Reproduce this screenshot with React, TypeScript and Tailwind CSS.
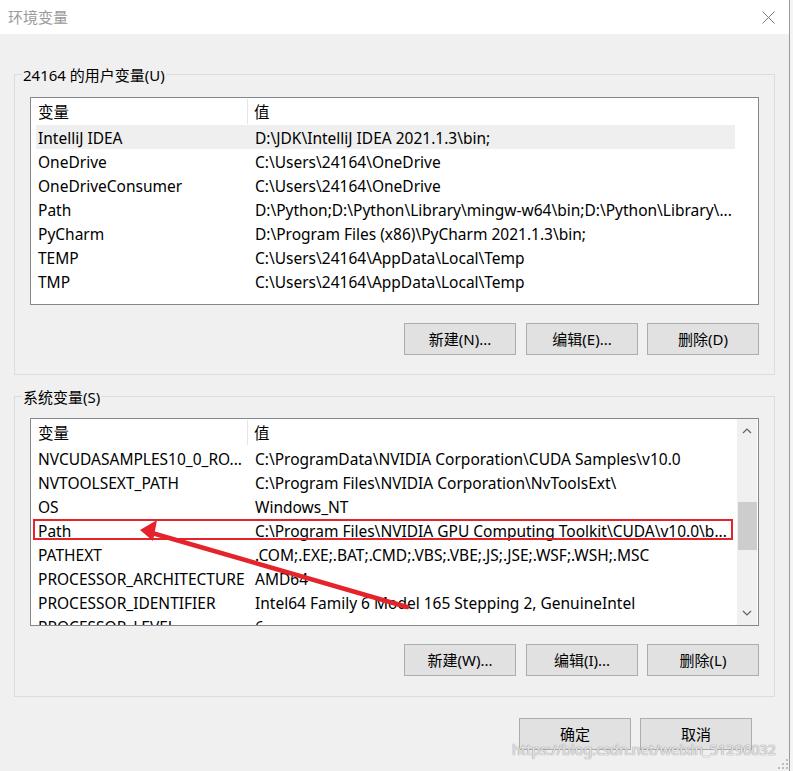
import React from "react";

const FONT = '"Noto Sans", "Noto Sans CJK SC", sans-serif';

const userVars: [string, string][] = [
  ["IntelliJ IDEA", "D:\\JDK\\IntelliJ IDEA 2021.1.3\\bin;"],
  ["OneDrive", "C:\\Users\\24164\\OneDrive"],
  ["OneDriveConsumer", "C:\\Users\\24164\\OneDrive"],
  ["Path", "D:\\Python;D:\\Python\\Library\\mingw-w64\\bin;D:\\Python\\Library\\..."],
  ["PyCharm", "D:\\Program Files (x86)\\PyCharm 2021.1.3\\bin;"],
  ["TEMP", "C:\\Users\\24164\\AppData\\Local\\Temp"],
  ["TMP", "C:\\Users\\24164\\AppData\\Local\\Temp"],
];

const sysVars: [string, string][] = [
  ["NVCUDASAMPLES10_0_RO...", "C:\\ProgramData\\NVIDIA Corporation\\CUDA Samples\\v10.0"],
  ["NVTOOLSEXT_PATH", "C:\\Program Files\\NVIDIA Corporation\\NvToolsExt\\"],
  ["OS", "Windows_NT"],
  ["Path", "C:\\Program Files\\NVIDIA GPU Computing Toolkit\\CUDA\\v10.0\\b..."],
  ["PATHEXT", ".COM;.EXE;.BAT;.CMD;.VBS;.VBE;.JS;.JSE;.WSF;.WSH;.MSC"],
  ["PROCESSOR_ARCHITECTURE", "AMD64"],
  ["PROCESSOR_IDENTIFIER", "Intel64 Family 6 Model 165 Stepping 2, GenuineIntel"],
  ["PROCESSOR_LEVEL", "6"],
];

function Btn({ label, className = "" }: { label: string; className?: string }) {
  return (
    <div
      className={`flex h-[32px] w-[112px] items-center justify-center border border-[#adadad] bg-[#e1e1e1] text-[15px] text-black ${className}`}
    >
      {label}
    </div>
  );
}

function Row({ name, value, selected, marked }: { name: string; value: string; selected?: boolean; marked?: boolean }) {
  return (
    <div className={`relative ml-[5px] flex h-[24px] w-[699px] shrink-0 items-center pt-[3px] ${selected ? "bg-[#efefef]" : ""}`}>
      <div className="w-[212px] shrink-0 overflow-hidden whitespace-nowrap pl-[2px]">{name}</div>
      <div className="flex-1 overflow-hidden whitespace-nowrap pl-[7px]">{value}</div>
      {marked && <div className="absolute -left-[3px] right-[2px] top-[1px] bottom-[2px] border-2 border-[#e5232b]" />}
    </div>
  );
}

function Header() {
  return (
    <div className="flex h-[27px] w-[704px] shrink-0 items-center bg-white">
      <div className="flex h-[25px] w-[217px] shrink-0 items-center border-r border-[#e5e5e5] pl-[7px] pt-[2px]">变量</div>
      <div className="pl-[6px] pt-[2px]">值</div>
    </div>
  );
}

function Scrollbar() {
  return (
    <div className="flex h-full w-[20px] shrink-0 flex-col bg-[#f0f0f0]">
      <div className="flex h-[24px] items-center justify-center">
        <svg width="10" height="6" viewBox="0 0 10 6">
          <path d="M1 5 L5 1 L9 5" fill="none" stroke="#606060" strokeWidth="1.2" />
        </svg>
      </div>
      <div className="h-[59px]" />
      <div className="mx-auto h-[48px] w-[19px] bg-[#cdcdcd]" />
      <div className="flex-1" />
      <div className="flex h-[24px] items-center justify-center">
        <svg width="10" height="6" viewBox="0 0 10 6">
          <path d="M1 1 L5 5 L9 1" fill="none" stroke="#606060" strokeWidth="1.2" />
        </svg>
      </div>
    </div>
  );
}

function Group({ title, children }: { title: string; children: React.ReactNode }) {
  return (
    <div className="ml-[14px] w-[761px] border border-[#dcdcdc]">
      <div className="-mt-[10px] ml-[7px] w-fit bg-[#f0f0f0] px-[1px] text-[15px] leading-[20px] text-black">{title}</div>
      {children}
    </div>
  );
}

function ButtonRow({ labels }: { labels: string[] }) {
  return (
    <div className="mr-[15px] mt-[18px] flex justify-end gap-[9px]">
      {labels.map((l, i) => (
        <Btn key={l} label={l} className={i === 0 ? "mr-[1px]" : ""} />
      ))}
    </div>
  );
}

export default function App() {
  return (
    <div className="relative flex h-[771px] w-[793px] overflow-hidden text-[15.5px] text-black" style={{ fontFamily: FONT }}>
      <div className="flex w-[789px] flex-col bg-[#f0f0f0]">
        <div className="flex h-[34px] shrink-0 items-center justify-between bg-white pl-[8px] pr-[14px]">
          <span className="text-[15px] text-[#9b9b9b]">环境变量</span>
          <svg width="13" height="13" viewBox="0 0 13 13">
            <path d="M0.5 0.5 L12.5 12.5 M12.5 0.5 L0.5 12.5" stroke="#7a7a7a" strokeWidth="1" />
          </svg>
        </div>

        <div className="mt-[40px]">
          <Group title="24164 的用户变量(U)">
            <div className="ml-[15px] mt-[12px] flex h-[208px] w-[729px] flex-col overflow-hidden border border-[#828790] bg-white">
              <Header />
              {userVars.map(([n, v], i) => (
                <Row key={n + i} name={n} value={v} selected={i === 0} />
              ))}
            </div>
            <ButtonRow labels={["新建(N)...", "编辑(E)...", "删除(D)"]} />
            <div className="h-[19px]" />
          </Group>
        </div>

        <div className="mt-[21px]">
          <Group title="系统变量(S)">
            <div className="ml-[15px] mt-[11px] flex h-[208px] w-[729px] overflow-hidden border border-[#828790] bg-white">
              <div className="flex w-[706px] flex-col overflow-hidden">
                <Header />
                {sysVars.map(([n, v], i) => (
                  <Row key={n + i} name={n} value={v} marked={n === "Path"} />
                ))}
              </div>
              <Scrollbar />
            </div>
            <ButtonRow labels={["新建(W)...", "编辑(I)...", "删除(L)"]} />
            <div className="h-[20px]" />
          </Group>
        </div>

        <div className="mr-[37px] mt-[21px] flex justify-end gap-[9px]">
          <Btn label="确定" />
          <Btn label="取消" />
        </div>
      </div>
      <div className="w-[1px] bg-[#9a9a9a]" />
      <div className="flex-1 bg-[#f4f4f4]" />

      {/* red annotation arrow */}
      <svg className="pointer-events-none absolute left-0 top-0" width="793" height="771">
        <line x1="407" y1="607" x2="152" y2="533" stroke="#e5232b" strokeWidth="4.5" strokeLinecap="round" />
        <polygon points="140,530 157,520 153,541" fill="#e5232b" />
      </svg>

      {/* watermark */}
      <div
        className="pointer-events-none absolute left-[512px] top-[739px] whitespace-nowrap text-[14.5px] text-white/80"
        style={{ textShadow: "0 0 1px #8a8a8a, 0 0 1px #8a8a8a" }}
      >
        https://blog.csdn.net/weixin_51296032
      </div>

      {/* size grip */}
      <svg className="absolute bottom-[1px] right-[4px]" width="12" height="12" viewBox="0 0 12 12">
        <g fill="#bcbcbc">
          <rect x="9" y="1" width="2" height="2" />
          <rect x="5" y="5" width="2" height="2" />
          <rect x="9" y="5" width="2" height="2" />
          <rect x="1" y="9" width="2" height="2" />
          <rect x="5" y="9" width="2" height="2" />
          <rect x="9" y="9" width="2" height="2" />
        </g>
      </svg>
    </div>
  );
}
